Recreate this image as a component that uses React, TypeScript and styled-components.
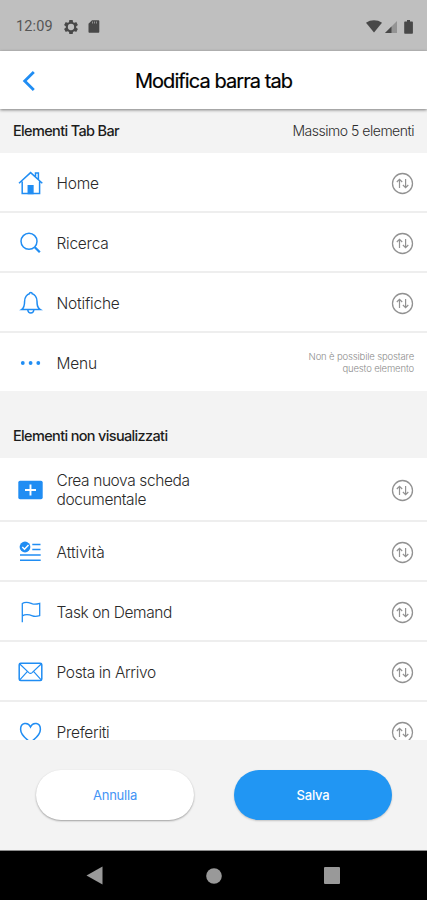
import React from "react";
import styled, { createGlobalStyle } from "styled-components";

const BLUE = "#2196f3";
const ICON_BLUE = "#208df3";

const GlobalStyle = createGlobalStyle`
  * { box-sizing: border-box; }
  body { margin: 0; background: #f3f3f3; font-family: Inter, "Liberation Sans", sans-serif; }
`;

const Screen = styled.div`
  width: 427px;
  height: 900px;
  display: flex;
  flex-direction: column;
  overflow: hidden;
  background: #f3f3f3;
`;

const StatusBar = styled.div`
  flex: none;
  height: 51px;
  display: flex;
  align-items: center;
  padding: 2px 14px 0 16px;
  background: #bfbfbf;
`;

const Clock = styled.span`
  width: 48px;
  padding-top: 1px;
  font: 400 14.5px/18px Roboto, sans-serif;
  letter-spacing: 0.15px;
  color: #565656;
`;

const StatusIcon = styled.svg<{ $gap?: number }>`
  display: block;
  flex: none;
  margin-left: ${(p) => p.$gap ?? 0}px;
`;

const Spacer = styled.div`
  flex: 1;
`;

const Header = styled.header`
  flex: none;
  height: 58px;
  display: grid;
  grid-template-columns: 60px 1fr 60px;
  align-items: center;
  background: #fff;
  box-shadow: 0 1px 3px rgba(0, 0, 0, 0.5);
  z-index: 1;
`;

const BackButton = styled.button`
  height: 58px;
  padding: 1px 0 0 22px;
  border: 0;
  background: none;
`;

const Title = styled.h1`
  margin: 2px 0 0;
  text-align: center;
  white-space: nowrap;
  font-size: 20px;
  font-weight: 400;
  line-height: 24px;
  letter-spacing: -0.93px;
  color: #000;
  -webkit-text-stroke: 0.2px #000;
`;

const List = styled.main`
  flex: 1;
  min-height: 0;
  overflow: hidden;
`;

const SectionHead = styled.div<{ $tall?: boolean }>`
  height: ${(p) => (p.$tall ? 67 : 44)}px;
  display: flex;
  justify-content: space-between;
  align-items: flex-end;
  padding: 0 13px 13px;
  line-height: 18px;
`;

const SectionTitle = styled.span`
  font-size: 14.5px;
  font-weight: 500;
  letter-spacing: -0.65px;
  color: #1c1c1c;
`;

const SectionNote = styled.span`
  font-size: 14px;
  font-weight: 300;
  letter-spacing: -0.48px;
  color: #2c2c2c;
`;

const Row = styled.div<{ $height: number; $last?: boolean }>`
  height: ${(p) => p.$height}px;
  display: flex;
  align-items: center;
  padding: 2px 13px 0 18px;
  background: #fff;
  border-bottom: ${(p) => (p.$last ? 0 : 2)}px solid #eeeeee;
`;

const RowIcon = styled.svg`
  display: block;
  flex: none;
  width: 26px;
  height: 26px;
  fill: none;
  stroke: ${ICON_BLUE};
  stroke-width: 1.5;
`;

const RowLabel = styled.span<{ $spacing: number }>`
  flex: 1;
  padding-left: 12.5px;
  white-space: pre-line;
  font-size: 15.5px;
  font-weight: 300;
  line-height: 19px;
  letter-spacing: ${(p) => p.$spacing}px;
  color: #2a2a2a;
`;

const RowNote = styled.span`
  white-space: pre-line;
  text-align: right;
  font-size: 9.5px;
  font-weight: 300;
  line-height: 12px;
  letter-spacing: -0.15px;
  color: #8c8c8c;
`;

const Footer = styled.footer`
  flex: none;
  height: 111px;
  display: flex;
  justify-content: space-between;
  padding: 30px 35px 0 36px;
  border-bottom: 1px solid #8c8c8c;
`;

const PillButton = styled.button<{ $primary?: boolean }>`
  width: 158px;
  height: 50px;
  padding: 0;
  border: 0;
  border-radius: 25px;
  font: ${(p) => (p.$primary ? 500 : 400)} 13px/18px Inter, sans-serif;
  letter-spacing: -0.2px;
  color: ${(p) => (p.$primary ? "#fff" : "#4494f5")};
  background: ${(p) => (p.$primary ? BLUE : "#fff")};
  box-shadow: 0 1px 2px rgba(0, 0, 0, ${(p) => (p.$primary ? 0.2 : 0.35)});
`;

const NavBar = styled.nav`
  flex: none;
  height: 49px;
  display: flex;
  align-items: center;
  justify-content: space-between;
  padding: 0 87px 0 86px;
  background: #000;
`;

const ReorderSvg = styled.svg`
  display: block;
  flex: none;
`;

const Reorder = () => (
  <ReorderSvg width="23" height="23" viewBox="0 0 23 23" fill="none" stroke="#929292" strokeWidth="1.3">
    <circle cx="11.5" cy="11.5" r="10" />
    <path d="M8.5 16V7.5M5.8 10l2.7-2.7L11.2 10M14.6 7v8.5M11.9 13l2.7 2.7L17.3 13" strokeWidth="1.2" />
  </ReorderSvg>
);

type IconName = "home" | "search" | "bell" | "menu" | "card" | "tasks" | "flag" | "mail" | "heart";

const icons: Record<IconName, React.ReactNode> = {
  home: (
    <>
      <path d="M1 13.3 12.6 2.6 24.3 13.3M4.200 11.500v12h17.400v-12M17.500 6.500V3.100h2.900v6.300" />
      <path d="M10.300 23.500v-7.800h4.600v7.800z" fill={ICON_BLUE} />
    </>
  ),
  search: (
    <>
      <circle cx="11" cy="11.300" r="8" />
      <path d="m16.800 17.200 5 5" strokeWidth="2.300" />
    </>
  ),
  bell: (
    <>
      <path d="M3.600 19.600c2.700-1.800 3-4 3-8.400 0-4.300 2.600-6.900 4.700-7.400.2-1.800 2.800-1.800 3 0 2.100.5 4.700 3.100 4.700 7.400 0 4.400.3 6.600 3.300 8.400z" />
      <path d="M9.800 20c.4 4 5.600 4 6 0" />
    </>
  ),
  menu: (
    <g fill={ICON_BLUE} stroke="none">
      <circle cx="4.800" cy="13" r="1.900" />
      <circle cx="12.600" cy="13" r="1.900" />
      <circle cx="20.300" cy="13" r="1.900" />
    </g>
  ),
  card: (
    <>
      <rect x="0.300" y="3.700" width="24.400" height="18.600" rx="1.700" fill={ICON_BLUE} stroke="none" />
      <path d="M12.500 7.500v11M7 13h11" stroke="#fff" strokeWidth="1.900" />
    </>
  ),
  tasks: (
    <>
      <circle cx="7" cy="8" r="5.400" fill={ICON_BLUE} stroke="none" />
      <path d="m4.300 8 2.200 2.200L10.500 6" stroke="#fff" />
      <path d="M14.300 5.500h8.200M14.300 10.500h8.200M2 16h20.700M2 21.300h20.700" strokeWidth="1.400" />
    </>
  ),
  flag: (
    <path
      d="M4.300 23.200V4.600c4-3 7.600-.6 10.200.3 2 .6 4.500.3 7.200-.5v12.200c-3 .9-5.400 1-7.200.2-3-1.200-6.500-2.200-10.200.1"
      strokeWidth="1.300"
    />
  ),
  mail: (
    <>
      <rect x="1.200" y="4.200" width="22.600" height="17.200" rx="1.500" />
      <path
        d="m1.800 5 9 8.600c1 .9 2.300.9 3.300 0L23.200 5M1.800 20.800l7.700-8.400M23.200 20.800l-7.700-8.400"
        strokeWidth="1.200"
      />
    </>
  ),
  heart: <path d="M12.500 23.200C6.500 19 2.600 15 2.600 10.200 2.600 3.600 10 2.600 12.500 8c2.500-5.400 9.900-4.400 9.900 2.200 0 4.800-3.900 8.800-9.900 13z" />,
};

interface Item {
  icon: IconName;
  label: string;
  height: number;
  spacing: number;
  last?: boolean;
  note?: string;
}

const visibleItems: Item[] = [
  { icon: "home", label: "Home", height: 60, spacing: -0.2 },
  { icon: "search", label: "Ricerca", height: 60, spacing: -0.25 },
  { icon: "bell", label: "Notifiche", height: 60, spacing: -0.2 },
  { icon: "menu", label: "Menu", height: 58, spacing: -0.2, last: true, note: "Non è possibile spostare\nquesto elemento" },
];

const hiddenItems: Item[] = [
  { icon: "card", label: "Crea nuova scheda\ndocumentale", height: 64, spacing: -0.39 },
  { icon: "tasks", label: "Attività", height: 60, spacing: 0 },
  { icon: "flag", label: "Task on Demand", height: 60, spacing: -0.4 },
  { icon: "mail", label: "Posta in Arrivo", height: 60, spacing: -0.35 },
  { icon: "heart", label: "Preferiti", height: 60, spacing: -0.3 },
];

const ItemRow = ({ item }: { item: Item }) => (
  <Row $height={item.height} $last={item.last}>
    <RowIcon viewBox="0 0 26 26">{icons[item.icon]}</RowIcon>
    <RowLabel $spacing={item.spacing}>{item.label}</RowLabel>
    {item.note ? <RowNote>{item.note}</RowNote> : <Reorder />}
  </Row>
);

export default function App() {
  return (
    <Screen>
      <GlobalStyle />
      <StatusBar>
        <Clock>12:09</Clock>
        <StatusIcon width="14" height="14" viewBox="2 2 20 20" fill="#484848">
          <path d="M19.430 12.980c.04-.32.07-.64.07-.98s-.03-.66-.07-.98l2.110-1.650c.19-.15.24-.42.12-.64l-2-3.460c-.12-.22-.39-.3-.61-.22l-2.490 1c-.52-.4-1.080-.73-1.690-.98l-.38-2.650A.49.49 0 0 0 14 2h-4c-.25 0-.46.18-.49.42l-.38 2.650c-.61.25-1.170.59-1.690.98l-2.490-1c-.23-.09-.49 0-.61.22l-2 3.460c-.13.22-.07.49.12.64l2.110 1.650c-.04.32-.07.65-.07.98s.03.66.07.98l-2.110 1.650c-.19.15-.24.42-.12.64l2 3.460c.12.22.39.3.61.22l2.490-1c.52.4 1.080.73 1.690.98l.38 2.650c.03.24.24.42.49.42h4c.25 0 .46-.18.49-.42l.38-2.650c.61-.25 1.170-.59 1.690-.98l2.490 1c.23.09.49 0 .61-.22l2-3.460c.12-.22.07-.49-.12-.64zM12 16.500a4.500 4.500 0 1 1 0-9 4.500 4.500 0 0 1 0 9z" />
        </StatusIcon>
        <StatusIcon $gap={10} width="12" height="13" viewBox="0 0 12 13" fill="#484848">
          <path d="M4 .3h6.300c.6 0 1 .4 1 1v10.400c0 .6-.4 1-1 1H1.500c-.6 0-1-.4-1-1V3.800z" />
          <path d="M4.500 1.500v2M6.500 1.500v2M8.500 1.500v2" stroke="#929292" />
        </StatusIcon>
        <Spacer />
        <StatusIcon width="16" height="13" viewBox="0 0 16 13">
          <path d="M0 2.700C4.600-.6 11.400-.6 16 2.700L8 12.600z" fill="#484848" />
        </StatusIcon>
        <StatusIcon $gap={3} width="12" height="12" viewBox="0 0 12 12">
          <path d="M12 0v12H0z" fill="#949494" />
          <path d="M6.500 5.500V12H0z" fill="#484848" />
        </StatusIcon>
        <StatusIcon $gap={7} width="9" height="14" viewBox="0 0 9 14">
          <path d="M3 0h3v1.500h2.200c.4 0 .7.300.7.700v10.900c0 .4-.3.700-.7.700H.9c-.4 0-.7-.3-.7-.7V2.200c0-.4.3-.7.700-.7H3z" fill="#484848" />
        </StatusIcon>
      </StatusBar>
      <Header>
        <BackButton aria-label="Indietro">
          <StatusIcon width="14" height="20" viewBox="0 0 14 20" fill="none" stroke={ICON_BLUE} strokeWidth="2.800">
            <path d="M11.800 1 2.700 10l9.100 9" />
          </StatusIcon>
        </BackButton>
        <Title>Modifica barra tab</Title>
      </Header>
      <List>
        <SectionHead>
          <SectionTitle>Elementi Tab Bar</SectionTitle>
          <SectionNote>Massimo 5 elementi</SectionNote>
        </SectionHead>
        {visibleItems.map((item) => (
          <ItemRow key={item.label} item={item} />
        ))}
        <SectionHead $tall>
          <SectionTitle>Elementi non visualizzati</SectionTitle>
        </SectionHead>
        {hiddenItems.map((item) => (
          <ItemRow key={item.label} item={item} />
        ))}
      </List>
      <Footer>
        <PillButton>Annulla</PillButton>
        <PillButton $primary>Salva</PillButton>
      </Footer>
      <NavBar>
        <StatusIcon width="17" height="19" viewBox="0 0 17 19" fill="#999">
          <path d="M0.500 9.500 16.500 0.500v18z" />
        </StatusIcon>
        <StatusIcon width="16" height="16" viewBox="0 0 16 16" fill="#999">
          <circle cx="8" cy="8" r="7.800" />
        </StatusIcon>
        <StatusIcon width="16" height="17" viewBox="0 0 16 17" fill="#999">
          <rect width="16" height="17" rx="1" />
        </StatusIcon>
      </NavBar>
    </Screen>
  );
}
